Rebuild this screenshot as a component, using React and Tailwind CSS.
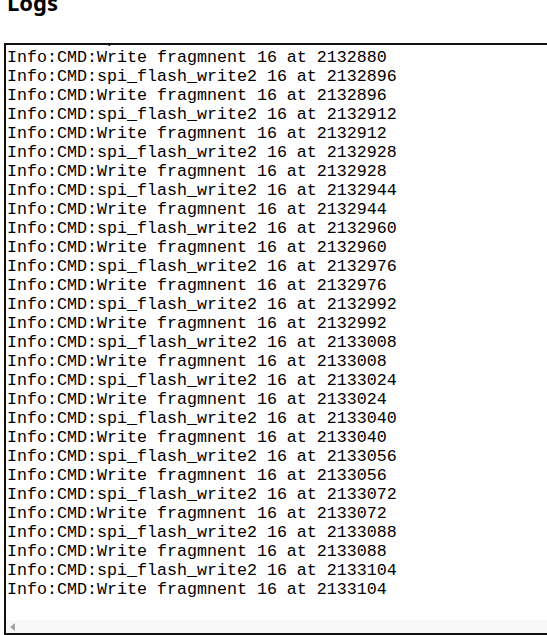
const START = 2132880;

function buildLines() {
  const lines = [];
  // first row is the partially scrolled one above the view
  lines.push(`Info:CMD:spi_flash_write2 16 at ${START}`);
  for (let i = 0; i < 15; i++) {
    const addr = START + i * 16;
    lines.push(`Info:CMD:Write fragmnent 16 at ${addr}`);
    if (i < 14) lines.push(`Info:CMD:spi_flash_write2 16 at ${addr + 16}`);
  }
  return lines;
}

export default function App() {
  const lines = buildLines();

  return (
    <div className="h-[635px] w-[547px] overflow-hidden bg-white">
      <h3
        className="-mt-[12px] ml-[7px] text-[22px] font-bold leading-[28px] text-black"
        style={{ fontFamily: '"Noto Sans", "Open Sans", sans-serif' }}
      >
        Logs
      </h3>

      <div className="ml-[4px] mt-[27px] flex h-[592px] w-[560px] flex-col border-2 border-[#111]">
        <div
          className="flex-1 overflow-hidden pl-[1px] text-[16.67px] leading-[19px] text-black"
          style={{ fontFamily: '"Liberation Mono", "Courier New", monospace' }}
        >
          <div className="-mt-[16px] whitespace-pre">
            {lines.map((l, i) => (
              <div key={i}>{l}</div>
            ))}
          </div>
        </div>
        <div className="flex h-[13px] items-center bg-[#f8f8f8] pl-[4px]">
          <svg width="5" height="8" viewBox="0 0 5 8">
            <path d="M0 4 L5 0 L5 8 Z" fill="#a3a3a3" />
          </svg>
        </div>
      </div>
    </div>
  );
}
